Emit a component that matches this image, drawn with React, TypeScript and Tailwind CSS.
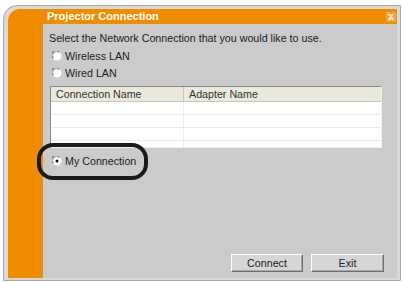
import React from "react";

const ORANGE = "bg-[#f08c00]";

function Radio({ checked = false }: { checked?: boolean }) {
  return (
    <svg width="10" height="10" viewBox="0 0 10 10" className="shrink-0">
      <circle cx="5" cy="5" r="4.6" fill="#ffffff" stroke="#e2e2e2" strokeWidth="0.6" />
      <path d="M1 7 A4.2 4.2 0 0 1 7 1" fill="none" stroke="#7a7a7a" strokeWidth="1.1" />
      <path d="M1.9 7.3 A3.3 3.3 0 0 1 7.3 1.9" fill="none" stroke="#b0b0b0" strokeWidth="1" />
      {checked && <circle cx="5" cy="5" r="1.5" fill="#111111" />}
    </svg>
  );
}

function RadioRow({ label, checked }: { label: string; checked?: boolean }) {
  return (
    <div className="flex items-center gap-[3px] h-[14px]">
      <Radio checked={checked} />
      <span>{label}</span>
    </div>
  );
}

function Button({ label, width }: { label: string; width: string }) {
  return (
    <button
      type="button"
      className={`${width} h-[18px] bg-[#d6d6d6] border border-t-white border-l-white border-b-[#6e6e6e] border-r-[#6e6e6e] shadow-[inset_-1px_-1px_0_#a8a8a8] text-[10.7px] leading-[14px] text-[#222]`}
    >
      {label}
    </button>
  );
}

export default function App() {
  const rows = [0, 1, 2, 3];
  return (
    <div className="relative w-[403px] h-[282px] bg-white overflow-hidden font-['Liberation_Sans',Arial,sans-serif] text-[10.7px] text-[#1c1c1c]">
      <div className="ml-[3px] mt-[5px] w-[398px] h-[276px] rounded-tl-[14px] bg-[#d9d9d9] border border-[#a9a9a9] pl-[4px] pt-[3px]">
        <div className={`w-[389px] h-[269px] rounded-tl-[12px] ${ORANGE} flex flex-col`}>
          <div className="h-[15px] shrink-0 flex items-center pl-[39px] pr-[1px]">
            <span className="flex-1 text-white font-bold text-[11px] leading-[13px]">
              Projector Connection
            </span>
            <span className="w-[10px] h-[10px] bg-[#f4a53a] flex items-center justify-center text-white font-bold text-[10px] leading-none">
              x
            </span>
          </div>
          <div className="flex flex-1">
            <div className="w-[35px] shrink-0" />
            <div className="flex-1 bg-[#cbcbcb] flex flex-col pl-[6px] pt-[8px] pr-[13px] pb-[6px]">
              <div className="leading-[13px]">
                Select the Network Connection that you would like to use.
              </div>
              <div className="mt-[4px] pl-[3px] flex flex-col gap-[3px]">
                <RadioRow label="Wireless LAN" />
                <RadioRow label="Wired LAN" />
              </div>
              <div className="mt-[6px] ml-[1px] w-[332px] h-[62px] bg-white border border-t-[#8a8a8a] border-l-[#8a8a8a] border-b-[#f2f2f2] border-r-[#f2f2f2] flex flex-col overflow-hidden">
                <div className="h-[15px] shrink-0 flex bg-[#ebe9db] border-b border-[#c9c7ba] text-[#333] leading-[14px]">
                  <div className="w-[133px] pl-[5px] border-r border-[#c9c7ba]">Connection Name</div>
                  <div className="flex-1 pl-[5px]">Adapter Name</div>
                </div>
                {rows.map((r) => (
                  <div key={r} className="h-[13px] shrink-0 flex border-b border-[#ececec]">
                    <div className="w-[133px] border-r border-[#ececec]" />
                    <div className="flex-1" />
                  </div>
                ))}
              </div>
              <div className="mt-[6px] pl-[3px]">
                <RadioRow label="My Connection" checked />
              </div>
              <div className="mt-auto flex justify-end gap-[8px]">
                <Button label="Connect" width="w-[72px]" />
                <Button label="Exit" width="w-[73px]" />
              </div>
            </div>
          </div>
        </div>
      </div>
      <div className="absolute left-[37px] top-[143px] w-[111px] h-[37px] rounded-[16px] border-[4px] border-[#1a1a1a]" />
    </div>
  );
}
